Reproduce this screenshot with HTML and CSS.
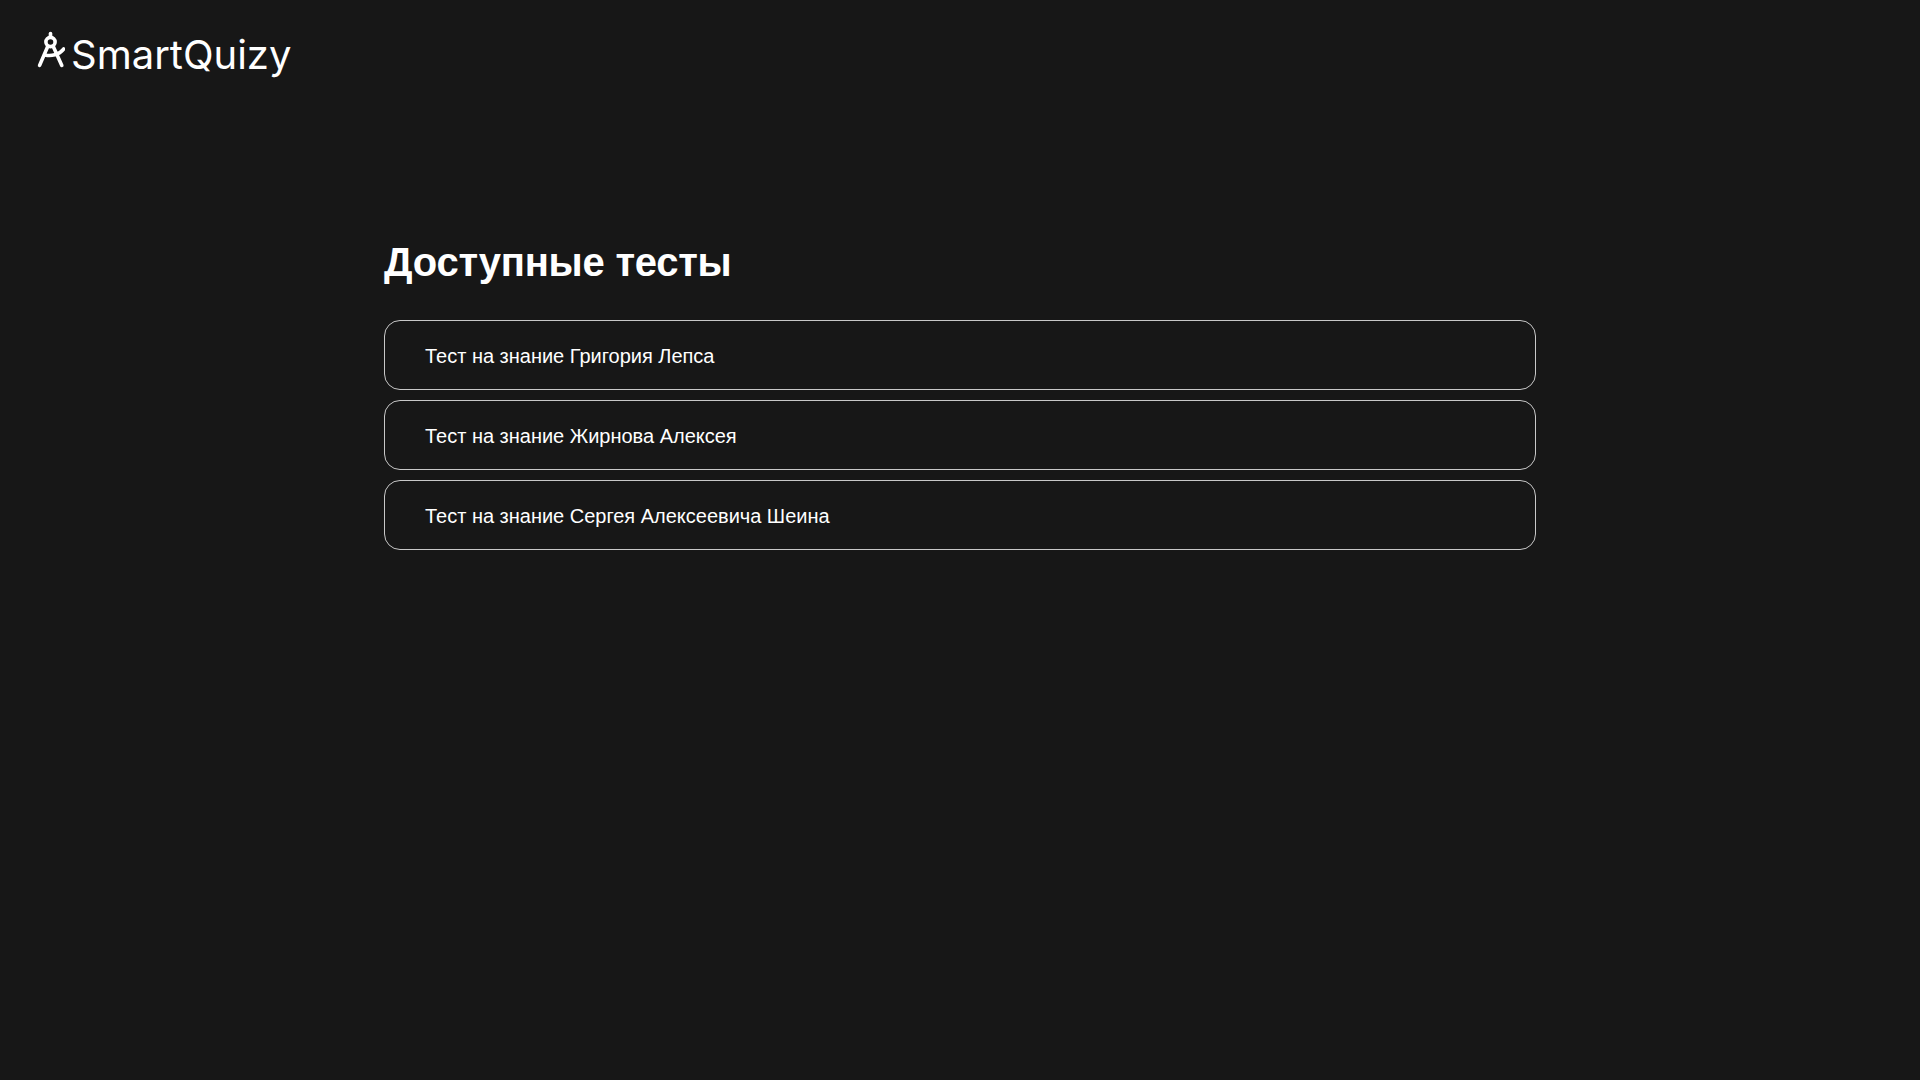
FILE: index.html
```html
<!DOCTYPE html>
<html lang="ru">
<head>
<meta charset="utf-8">
<title>SmartQuizy</title>
<link rel="stylesheet" href="styles.css">
</head>
<body>
<header class="header">
  <a class="logo">
    <svg class="logo-icon" width="28" height="40" viewBox="37 30 28 40" fill="none" stroke="#fff" stroke-width="3.6" stroke-linecap="round" stroke-linejoin="round">
      <path d="M50.5 33.5V37"/>
      <circle cx="50.5" cy="42" r="4.6"/>
      <path d="M47.5 47 39.6 65.4"/>
      <path d="M53.5 47 61.8 65.4"/>
      <path d="M45 55C51 56.5 59 55 63.6 49"/>
    </svg>
    <span class="logo-text">SmartQuizy</span>
  </a>
</header>
<main class="content">
  <h1 class="title">Доступные тесты</h1>
  <ul class="tests">
    <li class="test">Тест на знание Григория Лепса</li>
    <li class="test">Тест на знание Жирнова Алексея</li>
    <li class="test">Тест на знание Сергея Алексеевича Шеина</li>
  </ul>
</main>
</body>
</html>
```

FILE: styles.css
```css
* { box-sizing: border-box; }
html, body { margin: 0; height: 100%; }
body {
  background: #171717;
  color: #fff;
  font-family: "Liberation Sans", Arial, sans-serif;
}
.header {
  height: 110px;
  padding: 30px 0 0 37px;
}
.logo {
  display: flex;
  align-items: flex-start;
  gap: 6px;
  height: 50px;
}
.logo-icon { flex: none; }
.logo-text {
  font-family: Inter, sans-serif;
  font-size: 40px;
  font-weight: 400;
  line-height: 50px;
}
.content {
  width: 1152px;
  margin: 0 auto;
  padding-top: 128px;
}
.title {
  margin: 0 0 34px;
  font-size: 40px;
  letter-spacing: -0.24px;
  line-height: 48px;
  font-weight: 700;
}
.tests {
  list-style: none;
  margin: 0;
  padding: 0;
  display: flex;
  flex-direction: column;
  gap: 10px;
}
.test {
  height: 70px;
  padding: 2px 40px 0;
  display: flex;
  align-items: center;
  border: 1px solid #c8c8c8;
  border-radius: 16px;
  font-size: 20px;
  letter-spacing: -0.01px;
  font-weight: 400;
}
```
